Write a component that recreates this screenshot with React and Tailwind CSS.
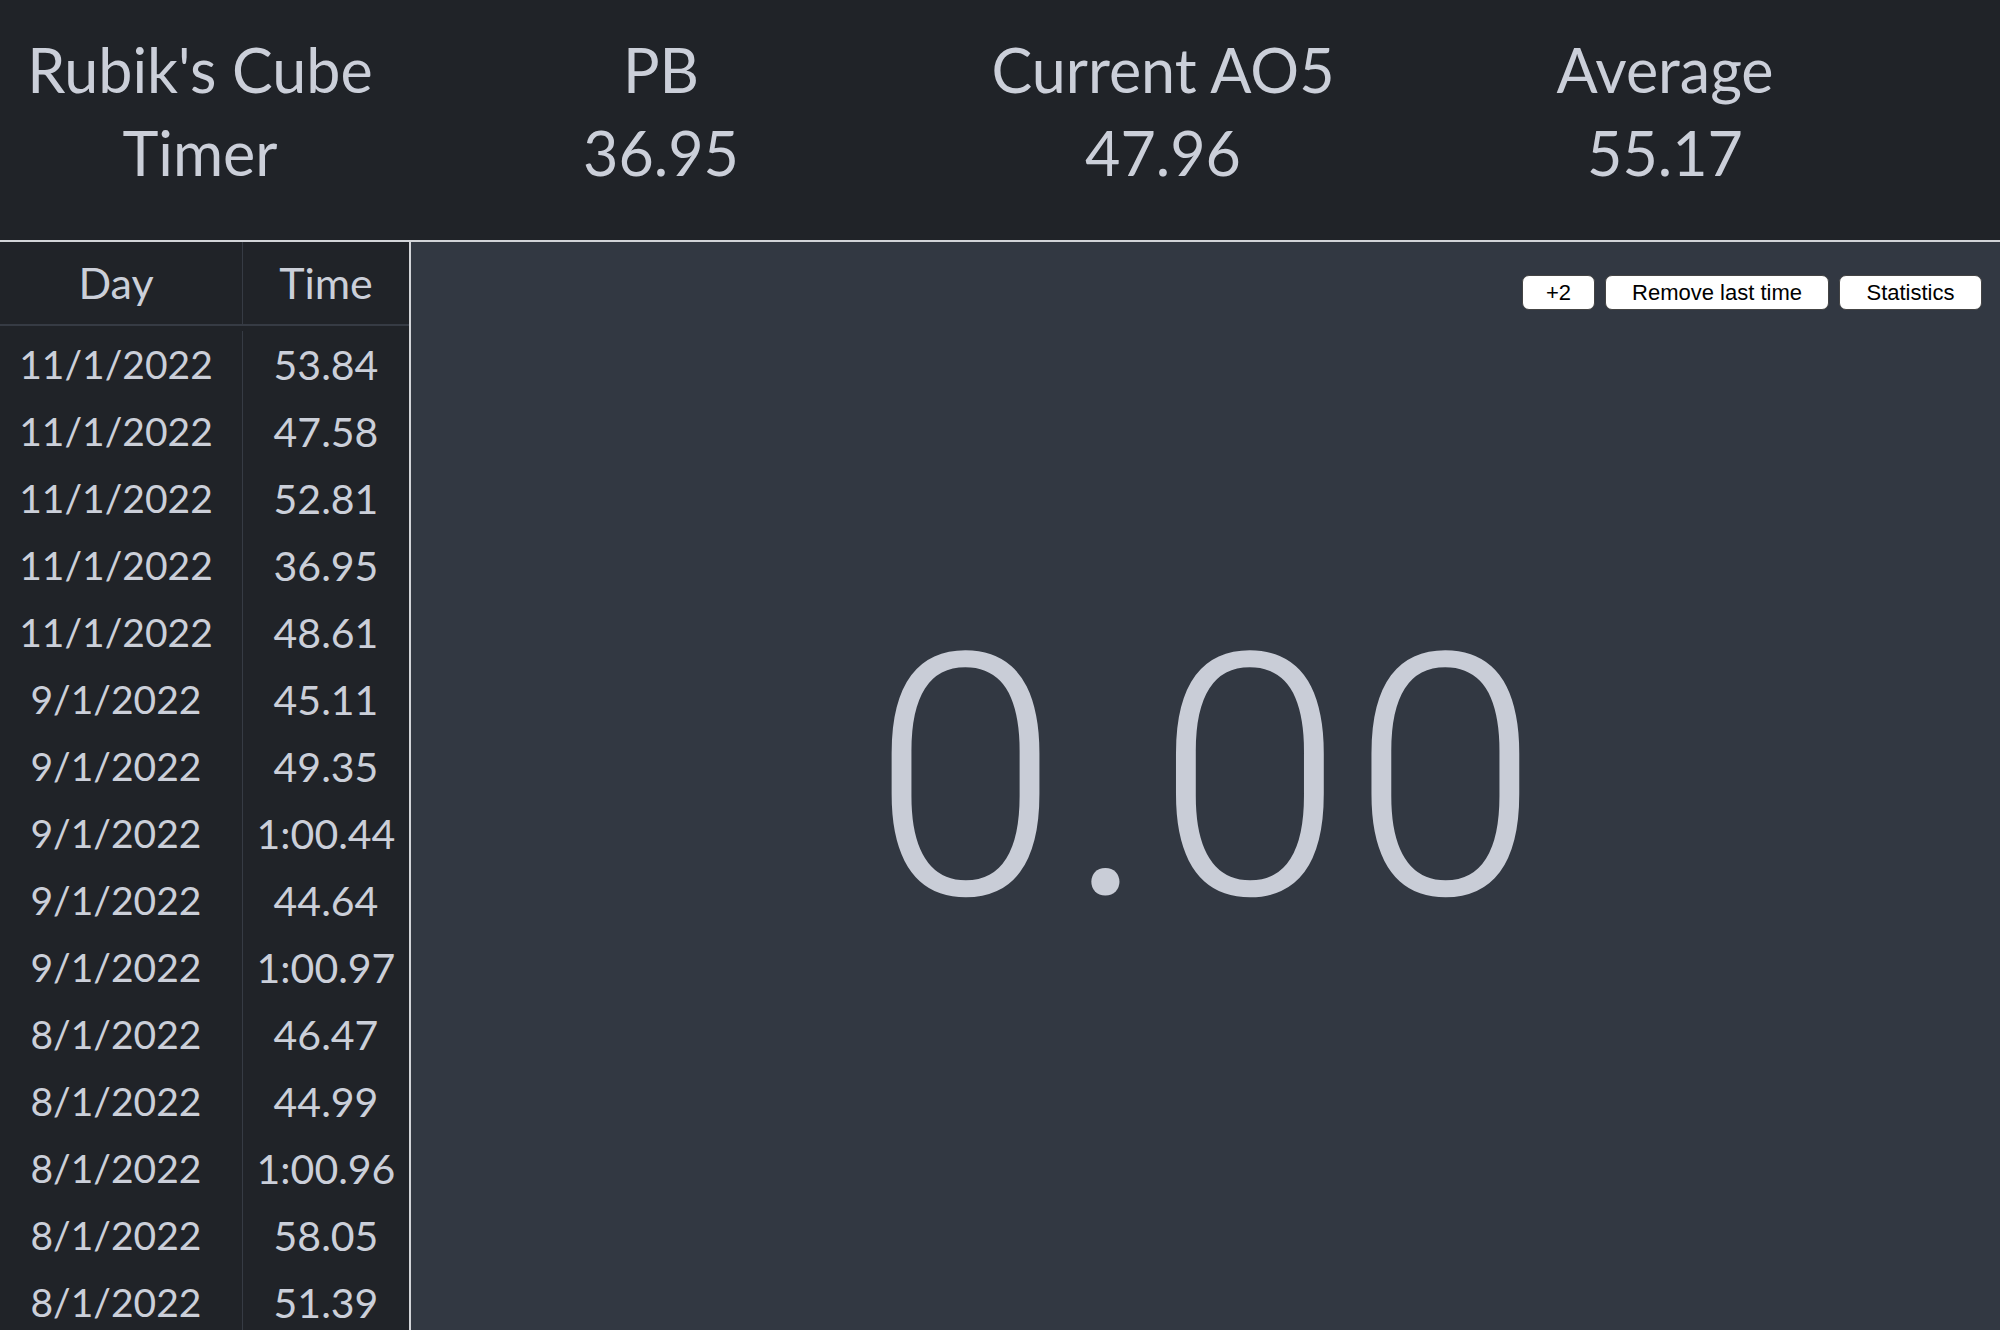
import React from "react";

const rows = [
  ["11/1/2022", "53.84"],
  ["11/1/2022", "47.58"],
  ["11/1/2022", "52.81"],
  ["11/1/2022", "36.95"],
  ["11/1/2022", "48.61"],
  ["9/1/2022", "45.11"],
  ["9/1/2022", "49.35"],
  ["9/1/2022", "1:00.44"],
  ["9/1/2022", "44.64"],
  ["9/1/2022", "1:00.97"],
  ["8/1/2022", "46.47"],
  ["8/1/2022", "44.99"],
  ["8/1/2022", "1:00.96"],
  ["8/1/2022", "58.05"],
  ["8/1/2022", "51.39"],
];

function Stat({ label, value }) {
  return (
    <div className="w-[502px] flex flex-col items-center leading-[83px] pt-[28px]">
      <div>{label}</div>
      <div>{value}</div>
    </div>
  );
}

export default function App() {
  return (
    <div
      className="w-[2000px] h-[1330px] overflow-hidden flex flex-col bg-[#323842] text-[#cbcfd9]"
      style={{ fontFamily: "Lato, 'Noto Sans', sans-serif" }}
    >
      <header className="h-[242px] shrink-0 bg-[#202328] border-b-2 border-[#d2d4d8] flex text-[61px]">
        <div className="w-[410px] pr-[10px] flex flex-col items-center leading-[83px] pt-[28px]">
          <div>Rubik's Cube</div>
          <div>Timer</div>
        </div>
        <Stat label="PB" value="36.95" />
        <Stat label="Current AO5" value="47.96" />
        <Stat label="Average" value="55.17" />
      </header>
      <div className="flex flex-1 min-h-0">
        <div className="w-[411px] shrink-0 bg-[#202328] border-r-2 border-[#d2d4d8] overflow-hidden">
          <div className="flex h-[84px] border-b-2 border-[#363b44] text-[43px] items-center">
            <div className="w-[243px] h-full flex items-center justify-center pr-[10px] border-r border-[#363b44]">Day</div>
            <div className="flex-1 h-full flex items-center justify-center">Time</div>
          </div>
          <div className="pt-[5px]">
            {rows.map(([d, t], i) => (
              <div key={i} className="flex h-[67px] text-[41px]">
                <div className="w-[243px] h-full flex items-center justify-center pr-[10px] border-r border-[#363b44] text-[39px]">{d}</div>
                <div className="flex-1 h-full flex items-center justify-center">{t}</div>
              </div>
            ))}
          </div>
        </div>
        <div className="flex-1 relative flex items-center justify-center">
          <div className="absolute top-[33px] right-[18px] flex gap-[10px] text-[22px] text-black" style={{ fontFamily: "'Liberation Sans', Arial, sans-serif" }}>
            <button className="w-[73px] h-[35px] bg-white border border-[#444] rounded-[7px]">+2</button>
            <button className="w-[224px] h-[35px] bg-white border border-[#444] rounded-[7px]">Remove last time</button>
            <button className="w-[143px] h-[35px] bg-white border border-[#444] rounded-[7px]">Statistics</button>
          </div>
          <div
            className="text-[338px] leading-none text-[#c9cdd7] -mt-[14px] font-light tracking-[8px] pl-[8px]"
            style={{ fontFamily: "Roboto, 'Liberation Sans', sans-serif" }}
          >
            0.00
          </div>
        </div>
      </div>
    </div>
  );
}
